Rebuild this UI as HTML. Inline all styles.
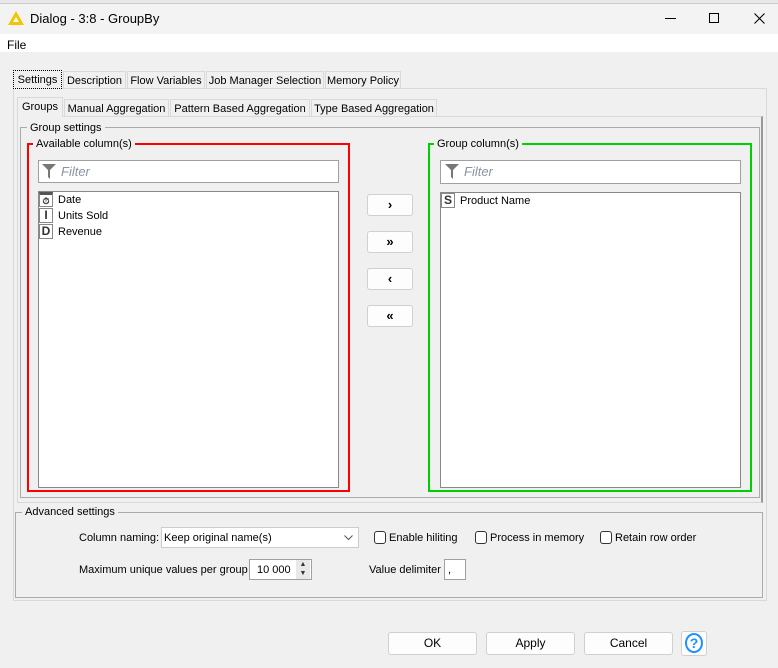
<!DOCTYPE html>
<html><head><meta charset="utf-8"><style>
*{box-sizing:border-box;margin:0;padding:0}
body{width:778px;height:668px;background:#f0f0f0;font-family:"Liberation Sans",sans-serif;font-size:11px;color:#000;position:relative;overflow:hidden}
.a{position:absolute}
.t{position:absolute;white-space:nowrap;line-height:14px}
.tab{position:absolute;border:1px solid #d9d9d9;border-bottom:none;background:#f0f0f0;text-align:center;line-height:18px;white-space:nowrap}
.box{position:absolute;background:#fff;border:1px solid #a0a0a0}
.btn{position:absolute;background:#fdfdfd;border:1px solid #d0d0d0;border-radius:3px;text-align:center;font-size:13px}
.chk{position:absolute;width:12px;height:13px;border:1px solid #333;border-radius:3px;background:#fff}
.ic{position:absolute;width:14px;height:15px;border:1px solid #888;font-weight:bold;font-size:12px;line-height:13px;text-align:center;color:#333;background:#fff}
.filt{font-style:italic;color:#8a93a3;font-size:13px}
</style></head><body>
<div class="a" style="left:0;top:0;width:778px;height:4px;background:#e8e8e8;border-bottom:1px solid #ccc"></div>
<div class="a" style="left:0;top:4px;width:778px;height:30px;background:#f3f3f3"></div>
<svg class="a" style="left:8px;top:11px" width="16" height="14"><polygon points="8,0 16,14 0,14" fill="#f5c400"/><polygon points="8,6 11,11 5,11" fill="#fff"/></svg>
<div class="t" style="left:30px;top:12px;font-size:13px">Dialog - 3:8 - GroupBy</div>
<div class="a" style="left:665px;top:18px;width:11px;height:1px;background:#000"></div>
<div class="a" style="left:709px;top:13px;width:10px;height:10px;border:1px solid #000"></div>
<svg class="a" style="left:754px;top:13px" width="11" height="11"><path d="M0.5,0.5L10.5,10.5M10.5,0.5L0.5,10.5" stroke="#000" stroke-width="1.1"/></svg>
<div class="a" style="left:0;top:34px;width:778px;height:18px;background:#fff"></div>
<div class="t" style="left:7px;top:38px;font-size:12px">File</div>

<div class="a" style="left:13px;top:88px;width:754px;height:513px;border:1px solid #d9d9d9"></div>
<div class="tab" style="left:13px;top:70px;width:49px;height:19px;border:1px dotted #000">Settings</div>
<div class="tab" style="left:63px;top:71px;width:63px;height:17px">Description</div>
<div class="tab" style="left:127px;top:71px;width:78px;height:17px">Flow Variables</div>
<div class="tab" style="left:206px;top:71px;width:118px;height:17px">Job Manager Selection</div>
<div class="tab" style="left:325px;top:71px;width:76px;height:17px">Memory Policy</div>

<div class="a" style="left:17px;top:116px;width:746px;height:387px;border:1px solid #d9d9d9;border-right:2px solid #999"></div>
<div class="tab" style="left:17px;top:97px;width:46px;height:20px;background:#f0f0f0">Groups</div>
<div class="tab" style="left:64px;top:99px;width:105px;height:17px">Manual Aggregation</div>
<div class="tab" style="left:170px;top:99px;width:140px;height:17px">Pattern Based Aggregation</div>
<div class="tab" style="left:311px;top:99px;width:126px;height:17px">Type Based Aggregation</div>

<div class="a" style="left:20px;top:127px;width:740px;height:371px;border:1px solid #aaa"></div>
<div class="t" style="left:27px;top:121px;background:#f0f0f0;padding:0 3px">Group settings</div>

<div class="a" style="left:27px;top:143px;width:323px;height:349px;border:2px solid #f00"></div>
<div class="t" style="left:33px;top:137px;background:#f0f0f0;padding:0 3px">Available column(s)</div>
<div class="box" style="left:38px;top:160px;width:301px;height:23px"></div>
<svg class="a" style="left:42px;top:164px" width="14" height="15"><path d="M0,0H14L8,6V15L6,13V6Z" fill="#777"/></svg>
<div class="t filt" style="left:61px;top:165px">Filter</div>
<div class="box" style="left:38px;top:191px;width:301px;height:297px;border-color:#888"></div>
<div class="ic" style="left:39px;top:192px;font-size:9px;border-top:3px solid #555">⏱</div>
<div class="t" style="left:58px;top:193px">Date</div>
<div class="ic" style="left:39px;top:208px">I</div>
<div class="t" style="left:58px;top:209px">Units Sold</div>
<div class="ic" style="left:39px;top:224px">D</div>
<div class="t" style="left:58px;top:225px">Revenue</div>

<div class="btn" style="left:367px;top:194px;width:46px;height:22px;line-height:20px;font-weight:bold">›</div>
<div class="btn" style="left:367px;top:231px;width:46px;height:22px;line-height:20px;font-weight:bold">»</div>
<div class="btn" style="left:367px;top:268px;width:46px;height:22px;line-height:20px;font-weight:bold">‹</div>
<div class="btn" style="left:367px;top:305px;width:46px;height:22px;line-height:20px;font-weight:bold">«</div>

<div class="a" style="left:428px;top:143px;width:324px;height:349px;border:2px solid #00d000"></div>
<div class="t" style="left:434px;top:137px;background:#f0f0f0;padding:0 3px">Group column(s)</div>
<div class="box" style="left:440px;top:160px;width:301px;height:24px"></div>
<svg class="a" style="left:445px;top:164px" width="14" height="15"><path d="M0,0H14L8,6V15L6,13V6Z" fill="#777"/></svg>
<div class="t filt" style="left:464px;top:165px">Filter</div>
<div class="box" style="left:440px;top:192px;width:301px;height:296px;border-color:#888"></div>
<div class="ic" style="left:441px;top:193px">S</div>
<div class="t" style="left:460px;top:194px">Product Name</div>

<div class="a" style="left:15px;top:512px;width:748px;height:86px;border:1px solid #aaa"></div>
<div class="t" style="left:22px;top:505px;background:#f0f0f0;padding:0 3px">Advanced settings</div>
<div class="t" style="left:79px;top:531px">Column naming:</div>
<div class="box" style="left:161px;top:527px;width:198px;height:21px;border-color:#ccc"></div>
<div class="t" style="left:164px;top:531px">Keep original name(s)</div>
<svg class="a" style="left:344px;top:535px" width="9" height="6"><path d="M0.5,0.5L4.5,4.5L8.5,0.5" fill="none" stroke="#555"/></svg>
<div class="chk" style="left:374px;top:531px"></div><div class="t" style="left:389px;top:531px">Enable hiliting</div>
<div class="chk" style="left:475px;top:531px"></div><div class="t" style="left:490px;top:531px">Process in memory</div>
<div class="chk" style="left:600px;top:531px"></div><div class="t" style="left:615px;top:531px">Retain row order</div>
<div class="t" style="left:79px;top:563px">Maximum unique values per group</div>
<div class="box" style="left:249px;top:559px;width:63px;height:21px"></div>
<div class="t" style="left:257px;top:563px">10 000</div>
<div class="a" style="left:296px;top:560px;width:14px;height:19px;background:#e8e8e8;font-size:7px;line-height:9px;text-align:center;color:#333">▲<br>▼</div>
<div class="t" style="left:369px;top:563px">Value delimiter</div>
<div class="box" style="left:444px;top:559px;width:22px;height:21px"></div>
<div class="t" style="left:448px;top:563px">,</div>

<div class="btn" style="left:388px;top:632px;width:89px;height:23px;line-height:21px;font-size:12px">OK</div>
<div class="btn" style="left:486px;top:632px;width:89px;height:23px;line-height:21px;font-size:12px">Apply</div>
<div class="btn" style="left:584px;top:632px;width:89px;height:23px;line-height:21px;font-size:12px">Cancel</div>
<div class="btn" style="left:681px;top:631px;width:26px;height:25px"></div>
<div class="a" style="left:685px;top:633px;width:18px;height:20px;border:2px solid #1e90ff;border-radius:50%;color:#1e90ff;text-align:center;font-size:14px;line-height:16px;font-weight:bold">?</div>
</body></html>
